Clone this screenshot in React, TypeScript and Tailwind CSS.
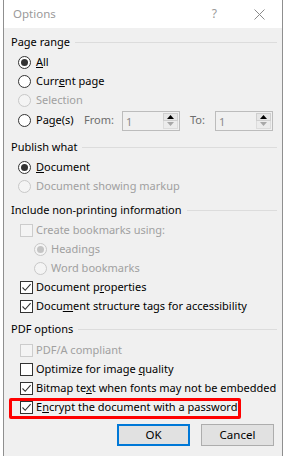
const font = { fontFamily: '"Noto Sans", "Open Sans", Arial, sans-serif' };

function Radio({ checked = false, disabled = false }: { checked?: boolean; disabled?: boolean }) {
  return (
    <span
      className={`flex h-[13px] w-[13px] items-center justify-center rounded-full border ${
        disabled ? "border-[#c8c8c8] bg-[#f4f4f4]" : "border-[#333333] bg-white"
      }`}
    >
      {checked && (
        <span className={`h-[7px] w-[7px] rounded-full ${disabled ? "bg-[#c4c4c4]" : "bg-[#333333]"}`} />
      )}
    </span>
  );
}

function Check({ checked = false, disabled = false }: { checked?: boolean; disabled?: boolean }) {
  return (
    <span
      className={`flex h-[13px] w-[13px] items-center justify-center border ${
        disabled ? "border-[#cccccc] bg-[#f4f4f4]" : "border-[#333333] bg-white"
      }`}
    >
      {checked && (
        <svg width="11" height="11" viewBox="0 0 11 11">
          <path d="M1.5 5.5 L4.2 8.3 L9.6 2.2" fill="none" stroke="#333333" strokeWidth="1.1" />
        </svg>
      )}
    </span>
  );
}

function Header({ label }: { label: string }) {
  return (
    <div className="flex h-[19px] items-center text-[#000000]">
      <span className="whitespace-nowrap pr-[5px]">{label}</span>
      <span className="h-px flex-1 bg-[#dcdcdc]" />
    </div>
  );
}

function RadioRow({
  children,
  checked,
  disabled,
  indent = false,
}: {
  children: React.ReactNode;
  checked?: boolean;
  disabled?: boolean;
  indent?: boolean;
}) {
  return (
    <div className={`flex h-[19px] items-center whitespace-nowrap ${indent ? "pl-[23px]" : "pl-[7px]"}`}>
      <span className={`flex items-center ${indent ? "w-[17px]" : "w-[18px]"}`}>
        <Radio checked={checked} disabled={disabled} />
      </span>
      <span className={disabled ? "text-[#a0a0a0]" : "text-[#000000]"}>{children}</span>
    </div>
  );
}

function CheckRow({
  children,
  checked,
  disabled,
}: {
  children: React.ReactNode;
  checked?: boolean;
  disabled?: boolean;
}) {
  return (
    <div className="flex h-[19px] items-center whitespace-nowrap pl-[9px]">
      <span className="flex w-[16px] items-center">
        <Check checked={checked} disabled={disabled} />
      </span>
      <span className={disabled ? "text-[#a0a0a0]" : "text-[#000000]"}>{children}</span>
    </div>
  );
}

function Spin() {
  return (
    <div className="flex h-[20px] w-[58px] items-stretch border border-[#bcbcbc] bg-[#f0f0f0]">
      <span className="flex-1 pl-[3px] pt-[2px] leading-[16px] text-[#8a8a8a]">1</span>
      <div className="my-px mr-px flex w-[15px] flex-col">
        <div className="flex flex-1 items-center justify-center border border-[#cfcfcf] bg-[#e6e6e6]">
          <svg width="7" height="4" viewBox="0 0 7 4">
            <path d="M0 4 L3.5 0 L7 4 Z" fill="#000000" />
          </svg>
        </div>
        <div className="flex flex-1 items-center justify-center border border-t-0 border-[#dcdcdc] bg-[#ececec]">
          <svg width="7" height="4" viewBox="0 0 7 4">
            <path d="M0 0 L3.5 4 L7 0 Z" fill="#a8a8a8" />
          </svg>
        </div>
      </div>
    </div>
  );
}

export default function App() {
  return (
    <div className="flex h-[456px] w-[284px] overflow-hidden bg-white text-[11px]" style={font}>
      <div className="w-[3px] bg-white" />
      <div className="flex w-[280px] flex-col border-x border-[#8f8f8f]">
        {/* title bar */}
        <div className="flex h-[28px] items-center bg-white pl-[9px] pr-[17px] text-[#9a9a9a]">
          <span className="text-[11.5px]">Options</span>
          <span className="ml-auto text-[12px]">?</span>
          <svg className="ml-[37px]" width="11" height="11" viewBox="0 0 11 11">
            <path d="M0.5 0.5 L10.5 10.5 M10.5 0.5 L0.5 10.5" stroke="#8a8a8a" strokeWidth="1" />
          </svg>
        </div>

        <div className="flex flex-1 flex-col bg-[#f0f0f0] pl-[7px] pr-[5px] pt-[5px]">
          <Header label="Page range" />
          <div className="mt-px">
            <RadioRow checked>
              <u>A</u>ll
            </RadioRow>
            <RadioRow>
              Curr<u>e</u>nt page
            </RadioRow>
            <RadioRow disabled>Selection</RadioRow>
            <div className="flex h-[21px] items-center whitespace-nowrap pl-[7px]">
              <span className="flex w-[18px] items-center">
                <Radio />
              </span>
              <span className="w-[48px]">
                Pa<u>g</u>e(s)
              </span>
              <span className="w-[38px] text-[#6d6d6d]">From:</span>
              <Spin />
              <span className="ml-[10px] w-[25px] text-[#6d6d6d]">To:</span>
              <Spin />
            </div>
          </div>

          <div className="mt-[7px]">
            <Header label="Publish what" />
          </div>
          <div className="mt-px">
            <RadioRow checked>
              <u>D</u>ocument
            </RadioRow>
            <RadioRow disabled>Document showing markup</RadioRow>
          </div>

          <div className="mt-[5px]">
            <Header label="Include non-printing information" />
          </div>
          <div className="mt-px">
            <CheckRow disabled>Create bookmarks using:</CheckRow>
            <RadioRow indent checked disabled>
              Headings
            </RadioRow>
            <RadioRow indent disabled>
              Word bookmarks
            </RadioRow>
            <CheckRow checked>
              Document p<u>r</u>operties
            </CheckRow>
            <CheckRow checked>
              Docu<u>m</u>ent structure tags for accessibility
            </CheckRow>
          </div>

          <div className="mt-[4px]">
            <Header label="PDF options" />
          </div>
          <div className="mt-[2px]">
            <CheckRow disabled>PDF/A compliant</CheckRow>
            <CheckRow>
              Optimize for image <u>q</u>uality
            </CheckRow>
            <CheckRow checked>
              Bitmap te<u>x</u>t when fonts may not be embedded
            </CheckRow>
            <div className="relative">
              <CheckRow checked>
                E<u>n</u>crypt the document with a password
              </CheckRow>
              <div className="pointer-events-none absolute left-[-2px] top-0 h-[21px] w-[232px] rounded-[2px] border-[3px] border-[#ff0000]" />
            </div>
          </div>

          <div className="mt-[7px] flex gap-[11px] pl-[106px]">
            <button className="h-[22px] w-[73px] border-2 border-[#0078d7] bg-[#e1e1e1] text-[11.5px] text-black">
              OK
            </button>
            <button className="h-[22px] w-[73px] border border-[#adadad] bg-[#e1e1e1] text-[11.5px] text-black">
              Cancel
            </button>
          </div>
        </div>
      </div>
      <div className="w-px bg-white" />
    </div>
  );
}
